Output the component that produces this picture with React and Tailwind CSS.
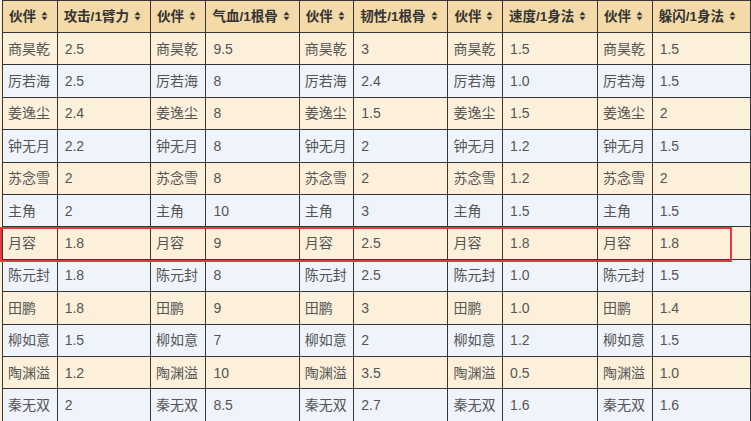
const headers = ["伙伴", "攻击/1臂力", "伙伴", "气血/1根骨", "伙伴", "韧性/1根骨", "伙伴", "速度/1身法", "伙伴", "躲闪/1身法"]
const widths = [55, 94, 56, 94, 55, 95, 55, 96, 55, 100]

const rows = [
  ["商昊乾", "2.5", "9.5", "3", "1.5", "1.5"],
  ["厉若海", "2.5", "8", "2.4", "1.0", "1.5"],
  ["姜逸尘", "2.4", "8", "1.5", "1.5", "2"],
  ["钟无月", "2.2", "8", "2", "1.2", "1.5"],
  ["苏念雪", "2", "8", "2", "1.2", "2"],
  ["主角", "2", "10", "3", "1.5", "1.5"],
  ["月容", "1.8", "9", "2.5", "1.8", "1.8"],
  ["陈元封", "1.8", "8", "2.5", "1.0", "1.5"],
  ["田鹏", "1.8", "9", "3", "1.0", "1.4"],
  ["柳如意", "1.5", "7", "2", "1.2", "1.5"],
  ["陶渊溢", "1.2", "10", "3.5", "0.5", "1.0"],
  ["秦无双", "2", "8.5", "2.7", "1.6", "1.6"],
]

function SortIcon() {
  return (
    <svg width="7" height="10" viewBox="0 0 7 10" className="inline-block ml-[5px] -mt-[2px] align-middle">
      <path d="M3.5 0.5 L6.5 4.3 L0.5 4.3 Z" fill="#3a3a3a" />
      <path d="M3.5 9.5 L6.5 5.7 L0.5 5.7 Z" fill="#3a3a3a" />
    </svg>
  )
}

export default function App() {
  return (
    <div className="w-[751px] h-[421px] overflow-hidden bg-[#fcf0da] relative" style={{ fontFamily: '"Liberation Sans", "Noto Sans CJK SC", sans-serif' }}>
      <table className="table-fixed border-collapse ml-[2px] text-[14px] leading-none">
        <colgroup>
          {widths.map((w, i) => (
            <col key={i} style={{ width: w }} />
          ))}
        </colgroup>
        <thead>
          <tr className="h-[32px] bg-[#f3daa8]">
            {headers.map((h, i) => (
              <th key={i} className="border border-[#363636] px-[6px] text-left font-bold text-[13.5px] text-[#333] whitespace-nowrap">
                {h}
                <SortIcon />
              </th>
            ))}
          </tr>
        </thead>
        <tbody>
          {rows.map((r, i) => (
            <tr key={i} className={`h-[32.4px] ${i % 2 === 0 ? "bg-[#fcf0da]" : "bg-[#eff4fb]"}`}>
              {[0, 1, 2, 3, 4].map((c) => [
                <td key={`n${c}`} className="border border-[#363636] px-[5px] text-[#555] whitespace-nowrap">{r[0]}</td>,
                <td key={`v${c}`} className="border border-[#363636] px-[7px] text-[#555] whitespace-nowrap">{r[c + 1]}</td>,
              ])}
            </tr>
          ))}
        </tbody>
      </table>
      <div className="absolute left-0 top-[227px] w-[732px] h-[35px] border-2 border-[#e23b3f]" />
    </div>
  )
}
